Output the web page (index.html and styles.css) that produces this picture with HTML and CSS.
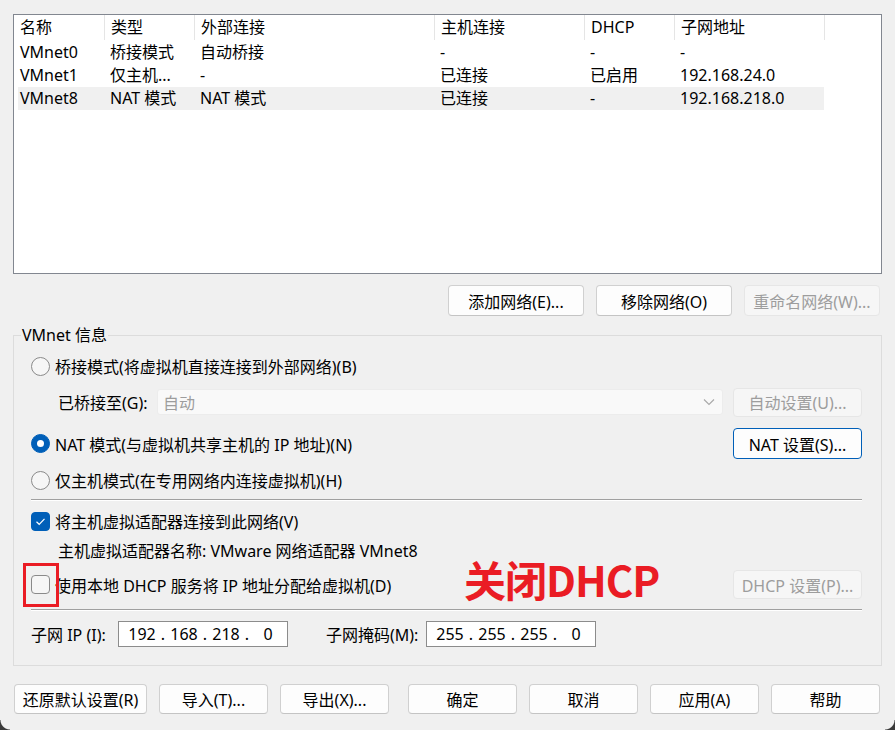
FILE: index.html
```html
<!DOCTYPE html>
<html lang="zh-CN">
<head>
    <meta charset="UTF-8">
    <title>虚拟网络编辑器</title>
    <link rel="stylesheet" href="styles.css">
</head>
<body>
<div class="dialog">
    <div class="list">
        <div class="list-head">
            <div class="hcell">名称</div>
            <div class="hcell">类型</div>
            <div class="hcell">外部连接</div>
            <div class="hcell">主机连接</div>
            <div class="hcell">DHCP</div>
            <div class="hcell">子网地址</div>
        </div>
        <div class="row">
            <div class="cell">VMnet0</div><div class="cell">桥接模式</div><div class="cell">自动桥接</div>
            <div class="cell">-</div><div class="cell">-</div><div class="cell">-</div>
        </div>
        <div class="row">
            <div class="cell">VMnet1</div><div class="cell">仅主机...</div><div class="cell">-</div>
            <div class="cell">已连接</div><div class="cell">已启用</div><div class="cell">192.168.24.0</div>
        </div>
        <div class="row selected">
            <div class="cell">VMnet8</div><div class="cell">NAT 模式</div><div class="cell">NAT 模式</div>
            <div class="cell">已连接</div><div class="cell">-</div><div class="cell">192.168.218.0</div>
        </div>
    </div>

    <div class="toolbar">
        <button class="btn btn-wide">添加网络(E)...</button>
        <button class="btn btn-wide">移除网络(O)</button>
        <button class="btn btn-wide" disabled>重命名网络(W)...</button>
    </div>

    <div class="group">
        <div class="group-title">VMnet 信息</div>

        <div class="line line-r1">
            <span class="radio"></span>
            <span class="label">桥接模式(将虚拟机直接连接到外部网络)(B)</span>
        </div>
        <div class="line line-r2">
            <span class="bridge-label">已桥接至(G):</span>
            <div class="combo">
                <span>自动</span>
                <svg class="chevron" width="12" height="8" viewBox="0 0 12 8"><path d="M1 1.5 L6 6.5 L11 1.5" fill="none" stroke="#a8a8a8" stroke-width="1.1"/></svg>
            </div>
            <button class="btn btn-side" disabled>自动设置(U)...</button>
        </div>
        <div class="line line-r3">
            <span class="radio checked"></span>
            <span class="label grow">NAT 模式(与虚拟机共享主机的 IP 地址)(N)</span>
            <button class="btn btn-side btn-default">NAT 设置(S)...</button>
        </div>
        <div class="line line-r4">
            <span class="radio"></span>
            <span class="label">仅主机模式(在专用网络内连接虚拟机)(H)</span>
        </div>

        <div class="sep sep-1"></div>

        <div class="line line-c1">
            <span class="check checked">
                <svg width="11" height="9" viewBox="0 0 11 9"><path d="M1.5 4.8 L4.2 7.3 L9.5 1.8" fill="none" stroke="#fff" stroke-width="1.2"/></svg>
            </span>
            <span class="label">将主机虚拟适配器连接到此网络(V)</span>
        </div>
        <div class="line line-c2">
            <span class="adapter">主机虚拟适配器名称: VMware 网络适配器 VMnet8</span>
        </div>
        <div class="line line-c3">
            <span class="check"></span>
            <span class="label grow">使用本地 DHCP 服务将 IP 地址分配给虚拟机(D)</span>
            <button class="btn btn-side" disabled>DHCP 设置(P)...</button>
        </div>

        <div class="sep sep-2"></div>

        <div class="line line-ip">
            <span class="ip-label">子网 IP (I):</span>
            <div class="ipbox">
                <span class="oct">192</span><span class="dot">.</span><span class="oct">168</span><span class="dot">.</span><span class="oct">218</span><span class="dot">.</span><span class="oct">0</span>
            </div>
            <span class="mask-label">子网掩码(M):</span>
            <div class="ipbox">
                <span class="oct">255</span><span class="dot">.</span><span class="oct">255</span><span class="dot">.</span><span class="oct">255</span><span class="dot">.</span><span class="oct">0</span>
            </div>
        </div>

        <div class="mark-box"></div>
        <div class="mark-text">关闭DHCP</div>
    </div>

    <div class="bottom">
        <div class="btn-set">
            <button class="btn btn-reset">还原默认设置(R)</button>
            <button class="btn btn-foot">导入(T)...</button>
            <button class="btn btn-foot">导出(X)...</button>
        </div>
        <div class="btn-set">
            <button class="btn btn-foot">确定</button>
            <button class="btn btn-foot">取消</button>
            <button class="btn btn-foot">应用(A)</button>
            <button class="btn btn-foot">帮助</button>
        </div>
    </div>
</div>
<div class="corner corner-left"></div>
<div class="corner corner-right"></div>
</body>
</html>
```

FILE: styles.css
```css
*{
    box-sizing: border-box;
}
body{
    margin:0;
    background:#f0f0f0;
    font-family:"Noto Sans","Noto Sans CJK SC",sans-serif;
    font-size:16px;
    color:#000;
    width:895px;
    height:730px;
    overflow:hidden;
    position:relative;
}
.dialog{
    padding:14px 13px 0 13px;
}

/* list */
.list{
    height:260px;
    background:#fff;
    border:1px solid #828790;
}
.list-head{
    display:grid;
    grid-template-columns:91px 90px 240px 150px 90px 150px;
    height:26px;
}
.hcell{
    line-height:25px;
    padding-left:6px;
    border-right:1px solid #e5e5e5;
    height:25px;
    white-space:nowrap;
}
.row{
    display:grid;
    grid-template-columns:86px 90px 240px 150px 90px 150px;
    width:806px;
    margin-left:4px;
    height:23px;
    line-height:23px;
}
.row .cell{
    padding-left:6px;
    white-space:nowrap;
}
.row .cell:first-child{
    padding-left:2px;
}
.row.selected{
    background:#f0f0f0;
}

/* buttons */
.btn{
    font-family:inherit;
    font-size:16px;
    color:#000;
    background:#fdfdfd;
    border:1px solid #d0d0d0;
    border-bottom-color:#c4c4c4;
    border-radius:4px;
    padding:0;
    white-space:nowrap;
}
.btn:disabled{
    color:#9d9d9d;
    background:#f6f6f6;
    border-color:#e6e6e6;
}
.toolbar{
    display:flex;
    justify-content:flex-end;
    gap:12px;
    margin-top:11px;
    padding-right:2px;
}
.btn-wide{
    width:136px;
    height:31px;
}

/* group */
.group{
    position:relative;
    margin-top:19px;
    border:1px solid #dcdcdc;
    height:331px;
    padding:0 19px 0 17px;
}
.group-title{
    position:absolute;
    left:7px;
    top:-11px;
    line-height:20px;
    padding:0 1px;
    background:#f0f0f0;
}
.line{
    display:flex;
    align-items:center;
}
.line-r1{ height:28px; margin-top:16px; }
.line-r2{ height:30px; margin-top:7px; }
.line-r3{ height:31px; margin-top:11px; }
.line-r4{ height:28px; margin-top:7px; }
.line-c1{ height:28px; margin-top:6px; }
.line-c2{ height:29px; }
.line-c3{ height:29px; margin-top:6px; }
.line-ip{ height:26px; margin-top:10px; }

.label{
    margin-left:5px;
    white-space:nowrap;
}
.grow{
    flex:1;
}
.radio{
    width:19px;
    height:19px;
    border:1px solid #8a8a8a;
    border-radius:50%;
    background:#f6f6f6;
    flex:none;
    display:flex;
    align-items:center;
    justify-content:center;
}
.radio.checked{
    background:#005fb8;
    border-color:#005fb8;
}
.radio.checked::after{
    content:"";
    width:7px;
    height:7px;
    border-radius:50%;
    background:#fff;
}
.check{
    width:19px;
    height:19px;
    border:1px solid #8a8a8a;
    border-radius:4px;
    background:#f6f6f6;
    flex:none;
    display:flex;
    align-items:center;
    justify-content:center;
}
.check.checked{
    background:#005fb8;
    border-color:#005fb8;
}
.bridge-label{
    margin-left:27px;
    width:99px;
    white-space:nowrap;
}
.combo{
    flex:1;
    height:26px;
    background:#f9f9f9;
    border:1px solid #ececec;
    border-radius:3px;
    color:#9d9d9d;
    display:flex;
    align-items:center;
    justify-content:space-between;
    padding:0 7px 0 5px;
    margin-right:10px;
}
.btn-side{
    width:129px;
    height:29px;
    flex:none;
}
.line-r3 .btn-side{
    height:31px;
}
.btn-default{
    border:1px solid #005fb8;
}
.adapter{
    margin-left:27px;
    white-space:nowrap;
}

.sep{
    height:2px;
    border-top:1px solid #a0a0a0;
    border-bottom:1px solid #fff;
}
.sep-1{ margin-top:5px; }
.sep-2{ margin-top:10px; }

.ip-label{
    width:87px;
    white-space:nowrap;
}
.mask-label{
    margin-left:38px;
    width:100px;
    white-space:nowrap;
}
.ipbox{
    width:170px;
    height:26px;
    background:#fff;
    border:1px solid #8c8c8c;
    display:flex;
    align-items:center;
    padding-left:5px;
    line-height:24px;
}
.oct{
    width:36px;
    text-align:center;
}
.dot{
    width:6px;
    text-align:center;
}

/* annotation */
.mark-box{
    position:absolute;
    left:9px;
    top:227px;
    width:36px;
    height:44px;
    border:3px solid #ea1c24;
}
.mark-text{
    position:absolute;
    left:450px;
    top:222px;
    font-size:42px;
    line-height:42px;
    font-weight:bold;
    color:#ea1c24;
    font-family:"Noto Sans CJK SC",sans-serif;
    letter-spacing:-1px;
}

/* footer */
.bottom{
    display:flex;
    justify-content:space-between;
    margin-top:18px;
    padding:0 2px 0 1px;
}
.btn-set{
    display:flex;
    gap:12px;
}
.btn-reset{
    width:133px;
    height:30px;
}
.btn-foot{
    width:109px;
    height:30px;
}

/* window corners */
.corner{
    position:absolute;
    bottom:0;
    width:10px;
    height:10px;
}
.corner-left{
    left:0;
    background:radial-gradient(circle at 100% 0, transparent 9px, #3a3a3a 10px);
}
.corner-right{
    right:0;
    background:radial-gradient(circle at 0 0, transparent 9px, #3a3a3a 10px);
}
```
